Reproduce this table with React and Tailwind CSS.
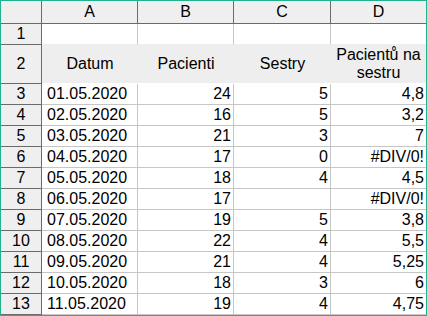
import React from "react";

const rows = [
  ["01.05.2020", "24", "5", "4,8"],
  ["02.05.2020", "16", "5", "3,2"],
  ["03.05.2020", "21", "3", "7"],
  ["04.05.2020", "17", "0", "#DIV/0!"],
  ["05.05.2020", "18", "4", "4,5"],
  ["06.05.2020", "17", "", "#DIV/0!"],
  ["07.05.2020", "19", "5", "3,8"],
  ["08.05.2020", "22", "4", "5,5"],
  ["09.05.2020", "21", "4", "5,25"],
  ["10.05.2020", "18", "3", "6"],
  ["11.05.2020", "19", "4", "4,75"],
];

const cols = ["A", "B", "C", "D"];

export default function App() {
  return (
    <div
      className="w-[427px] h-[316px] border border-[#20b28e] bg-white text-black text-[16px] overflow-hidden"
      style={{ fontFamily: '"Liberation Sans", Arial, sans-serif' }}
    >
      <div className="grid grid-cols-[41px_96px_96px_97px_95px] grid-rows-[23px_21px_39px_repeat(11,21px)]">
        {/* column headers */}
        <div className="bg-[#efefef] border-r border-b border-[#6b6b6b]"></div>
        {cols.map((c, i) => (
          <div
            key={c}
            className={`bg-[#efefef] border-b border-[#6b6b6b] flex items-center justify-center ${
              i < 3 ? "border-r" : ""
            }`}
          >
            {c}
          </div>
        ))}

        {/* row 1 */}
        <div className="bg-[#efefef] border-r border-b border-[#6b6b6b] flex items-center justify-center">
          1
        </div>
        <div className="border-r border-[#c6c6c6] border-b border-b-[#eeeeee]"></div>
        <div className="border-r border-[#c6c6c6] border-b border-b-[#eeeeee]"></div>
        <div className="border-r border-[#c6c6c6] border-b border-b-[#eeeeee]"></div>
        <div className="border-b border-[#eeeeee]"></div>

        {/* row 2 - titles */}
        <div className="bg-[#efefef] border-r border-b border-[#6b6b6b] flex items-center justify-center">
          2
        </div>
        <div className="bg-[#eeeeee] border-b border-white flex items-center justify-center">Datum</div>
        <div className="bg-[#eeeeee] border-b border-white flex items-center justify-center">Pacienti</div>
        <div className="bg-[#eeeeee] border-b border-white flex items-center justify-center">Sestry</div>
        <div className="bg-[#eeeeee] border-b border-white flex items-center justify-center text-center leading-[18px]">
          Pacientů na sestru
        </div>

        {rows.map((r, idx) => (
          <React.Fragment key={idx}>
            <div className="bg-[#efefef] border-r border-b border-[#6b6b6b] flex items-center justify-center">
              {idx + 3}
            </div>
            <div className="border-r border-b border-[#c6c6c6] flex items-center pl-[5px]">
              {r[0]}
            </div>
            <div className="border-r border-b border-[#c6c6c6] flex items-center justify-end pr-[2px]">
              {r[1]}
            </div>
            <div className="border-r border-b border-[#c6c6c6] flex items-center justify-end pr-[2px]">
              {r[2]}
            </div>
            <div className="border-b border-[#c6c6c6] flex items-center justify-end pr-[2px]">
              {r[3]}
            </div>
          </React.Fragment>
        ))}
      </div>
    </div>
  );
}
